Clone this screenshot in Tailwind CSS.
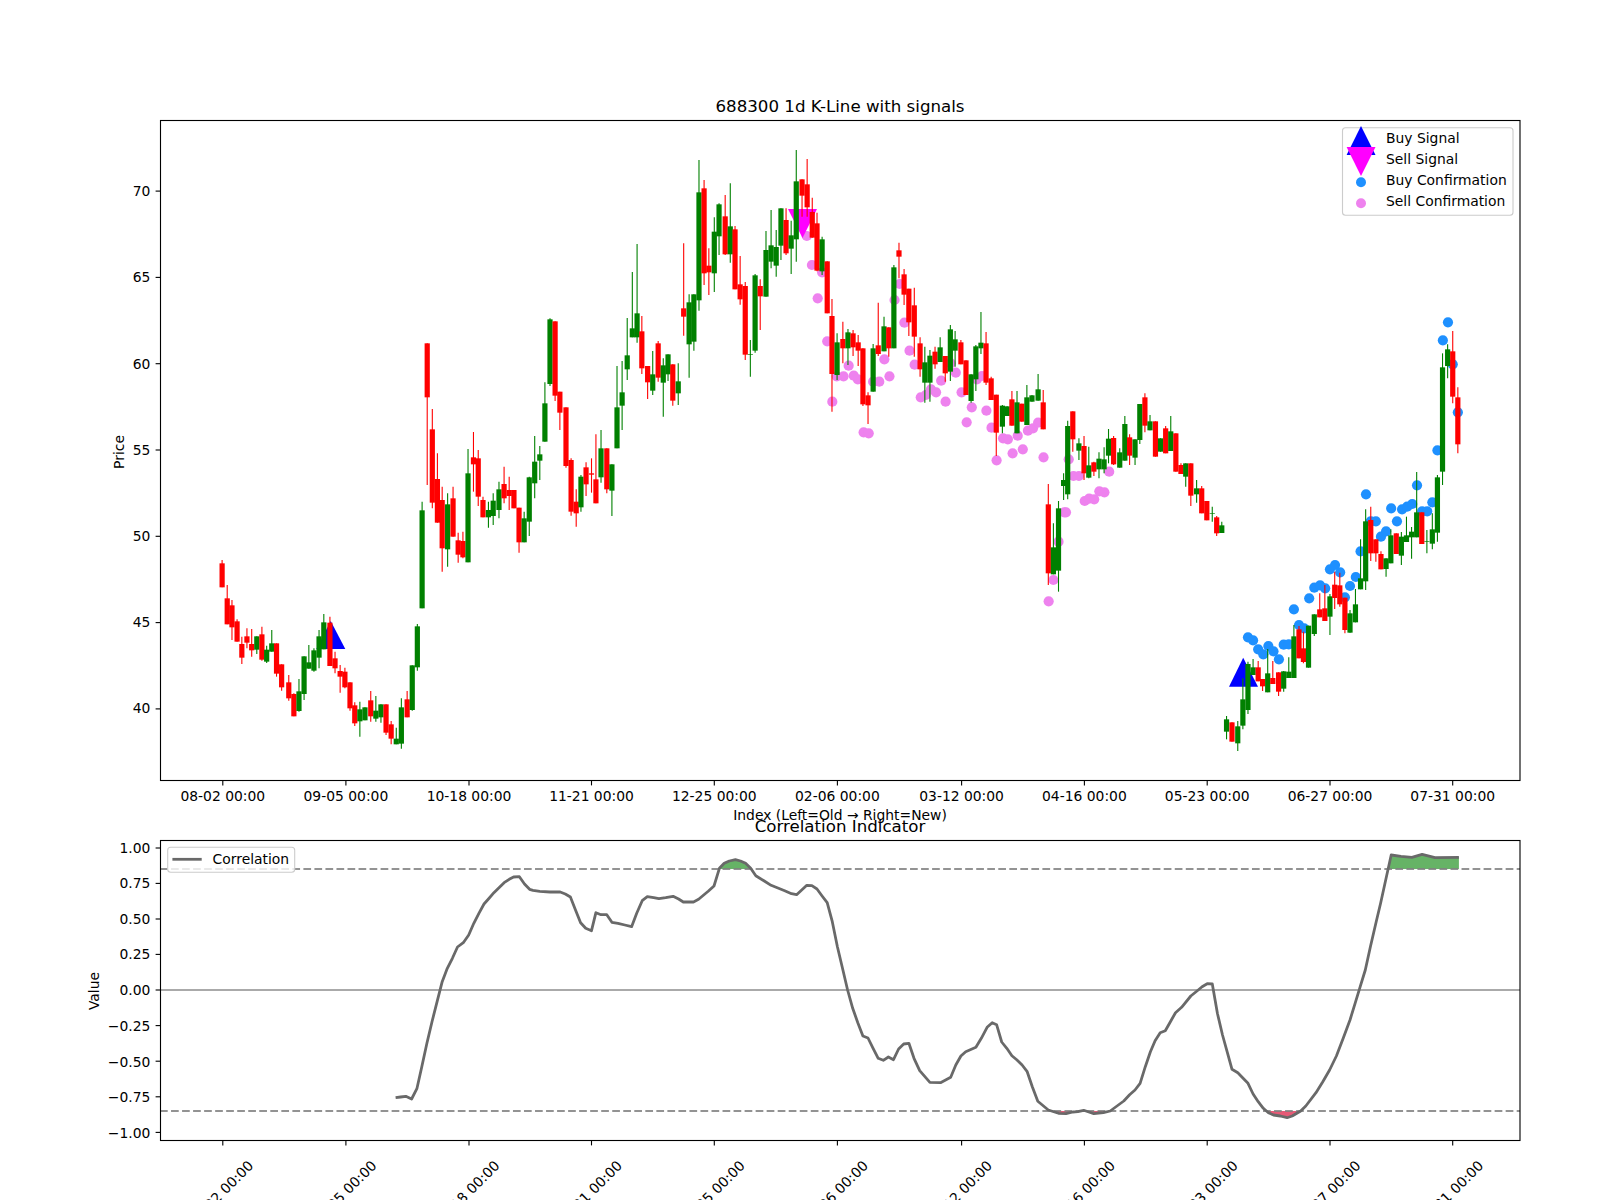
<!DOCTYPE html>
<html lang="en">
<head>
<meta charset="utf-8">
<title>688300 1d K-Line with signals</title>
<script src="https://cdn.jsdelivr.net/npm/@tailwindcss/browser@4"></script>
</head>
<body class="m-0 bg-white">
<div class="w-[1600px] h-[1200px] overflow-hidden bg-white">
<svg id="fig" class="block font-['DejaVu_Sans',sans-serif] text-[13.89px] fill-black" width="1600" height="1200" viewBox="0 0 1600 1200" xmlns="http://www.w3.org/2000/svg">
  <defs>
    <clipPath id="above"><rect x="160" y="840" width="1360" height="29"/></clipPath>
    <clipPath id="below"><rect x="160" y="1111" width="1360" height="29"/></clipPath>
    <clipPath id="ax1"><rect x="160" y="120" width="1360" height="660"/></clipPath>
  </defs>
  <g id="points" clip-path="url(#ax1)"></g>
  <g id="candles" clip-path="url(#ax1)"></g>
  <g id="ind"></g>
  <g id="ticks" stroke="#000" stroke-width="1.11"></g>
  <rect x="160.5" y="120.5" width="1359.5" height="660" fill="none" stroke="#000" stroke-width="1.11"/>
  <rect x="160.5" y="840.5" width="1359.5" height="300" fill="none" stroke="#000" stroke-width="1.11"/>

  <!-- price legend -->
  <rect x="1342.5" y="127.7" width="170.5" height="87.6" rx="3" fill="#fff" fill-opacity="0.8" stroke="#ccc" stroke-width="1.11"/>
  <polygon points="1346.6,155 1361,126 1375.5,155" fill="#0000ff"/>
  <polygon points="1346.6,147 1375.5,147 1361,176" fill="#ff00ff"/>
  <circle cx="1361" cy="182.3" r="5" fill="#1e90ff"/>
  <circle cx="1361" cy="203.3" r="5" fill="#ee82ee"/>
  <text x="1386" y="143">Buy Signal</text>
  <text x="1386" y="164">Sell Signal</text>
  <text x="1386" y="185">Buy Confirmation</text>
  <text x="1386" y="206">Sell Confirmation</text>

  <!-- titles and axis labels -->
  <text x="840" y="111.7" text-anchor="middle" class="text-[16.67px]">688300 1d K-Line with signals</text>
  <text x="840" y="820" text-anchor="middle">Index (Left=Old → Right=New)</text>
  <text x="840" y="831.7" text-anchor="middle" class="text-[16.67px]">Correlation Indicator</text>
  <text transform="translate(124 452) rotate(-90)" text-anchor="middle">Price</text>
  <text transform="translate(98.5 991) rotate(-90)" text-anchor="middle">Value</text>

  <!-- price ticks -->
  <g text-anchor="end">
    <text x="150.3" y="196">70</text>
    <text x="150.3" y="282">65</text>
    <text x="150.3" y="368.5">60</text>
    <text x="150.3" y="454.5">55</text>
    <text x="150.3" y="541">50</text>
    <text x="150.3" y="627">45</text>
    <text x="150.3" y="713">40</text>
  </g>
  <g text-anchor="middle">
    <text x="222.8" y="801">08-02 00:00</text>
    <text x="345.9" y="801">09-05 00:00</text>
    <text x="469" y="801">10-18 00:00</text>
    <text x="591.5" y="801">11-21 00:00</text>
    <text x="714.3" y="801">12-25 00:00</text>
    <text x="837.4" y="801">02-06 00:00</text>
    <text x="961.6" y="801">03-12 00:00</text>
    <text x="1084.4" y="801">04-16 00:00</text>
    <text x="1207.2" y="801">05-23 00:00</text>
    <text x="1330" y="801">06-27 00:00</text>
    <text x="1452.7" y="801">07-31 00:00</text>
  </g>

  <!-- indicator ticks -->
  <g text-anchor="end">
    <text x="150.3" y="853">1.00</text>
    <text x="150.3" y="888">0.75</text>
    <text x="150.3" y="924">0.50</text>
    <text x="150.3" y="959">0.25</text>
    <text x="150.3" y="995">0.00</text>
    <text x="150.3" y="1031">−0.25</text>
    <text x="150.3" y="1066.5">−0.50</text>
    <text x="150.3" y="1102">−0.75</text>
    <text x="150.3" y="1138">−1.00</text>
  </g>
  <g text-anchor="middle">
    <text transform="translate(220.8 1193) rotate(-45)" y="5">08-02 00:00</text>
    <text transform="translate(343.9 1193) rotate(-45)" y="5">09-05 00:00</text>
    <text transform="translate(467 1193) rotate(-45)" y="5">10-18 00:00</text>
    <text transform="translate(589.5 1193) rotate(-45)" y="5">11-21 00:00</text>
    <text transform="translate(712.3 1193) rotate(-45)" y="5">12-25 00:00</text>
    <text transform="translate(835.4 1193) rotate(-45)" y="5">02-06 00:00</text>
    <text transform="translate(959.6 1193) rotate(-45)" y="5">03-12 00:00</text>
    <text transform="translate(1082.4 1193) rotate(-45)" y="5">04-16 00:00</text>
    <text transform="translate(1205.2 1193) rotate(-45)" y="5">05-23 00:00</text>
    <text transform="translate(1328 1193) rotate(-45)" y="5">06-27 00:00</text>
    <text transform="translate(1450.7 1193) rotate(-45)" y="5">07-31 00:00</text>
  </g>

  <!-- indicator legend -->
  <rect x="167.7" y="847.3" width="127" height="25" rx="3" fill="#fff" fill-opacity="0.8" stroke="#ccc" stroke-width="1.11"/>
  <line x1="172.4" y1="859.3" x2="201.7" y2="859.3" stroke="#696969" stroke-width="2.78"/>
  <text x="212.6" y="864">Correlation</text>
</svg>
</div>
<script>
const NS = 'http://www.w3.org/2000/svg';
const add = (p, n, a) => { const e = document.createElementNS(NS, n); for (const k in a) e.setAttribute(k, a[k]); p.appendChild(e); return e; };
const X = (b, z) => b + z / 2.94, Y = (b, z) => b + z / 3;
const pts = document.getElementById('points'), cdl = document.getElementById('candles'), ind = document.getElementById('ind'), tks = document.getElementById('ticks');

const pink = '805 408,820 495,850 517,837 595,1078 552,1063 600,865 724,1092 668,1107 752,1122 794,928 797,913 829,893 829,943 827,955 838,1033 778,1048 829,1018 845,1000 845,880 905,972 997,987 1000,1140 892,1155 885,1170 868,1185 877,1200 842,1213 905,1243 818,1228 790,1260 877,1275 967,1290 922,1305 838,1320 828,1333 932,1348 983,1363 1081,1382 1015,1396 1018,1410 1060,1425 1007,1440 1048,1455 992,1470 985,1485 968,1501 1072,1575 1078,1589 1128,1605 1128,1567 1237,1622 1203,1635 1196,1650 1198,1665 1174,1680 1177,1694 1115,1530 1440,1516 1504,1545 1325,1562 1237';
pink.split(',').forEach(s => { const [x, y] = s.split(' ').map(Number); add(pts, 'circle', {cx: X(533, x), cy: Y(100, y), r: 5.1, fill: '#ee82ee'}); });
const blue = '535 562,550 571,565 598,580 613,595 588,610 604,626 628,640 584,655 583,670 478,685 525,700 535,715 445,730 413,747 406,762 415,776 358,791 345,806 367,820 442,835 408,852 381,866 304,882 133,896 214,911 214,926 260,941 244,956 175,973 214,988 178,1003 170,1018 162,1032 106,1047 184,1062 184,1077 157,1092 1,1108 -329,1123 -383,1137 -257,1152 -113';
blue.split(',').forEach(s => { const [x, y] = s.split(' ').map(Number); add(pts, 'circle', {cx: X(1066, x), cy: Y(450, y), r: 5.1, fill: '#1e90ff'}); });
add(pts, 'polygon', {points: '316.3,649 330.7,621 345.3,649', fill: '#0000ff'});
add(pts, 'polygon', {points: '1229,686.7 1243.2,657.7 1258,686.7', fill: '#0000ff'});
add(pts, 'polygon', {points: '788,209 817,209 802.5,238', fill: '#ff00ff'});

const segs = [
[0,480,`r653 240 250 322 322,r668 315 355 433 433,r682 360 376 442 480,r697 418 424 485 485,r711 470 492 533 552,r726 445 469 488 505,r740 447 492 511 530,g755 469 469 509 522,r770 440 463 539 542,g784 497 509 545 549,g799 450 490 515 515,r813 490 490 581 590,r828 553 553 622 632,r849 585 607 655 662,r864 640 642 709 709,g879 597 634 693 695,g894 529 529 642 660,g908 495 547 566 566,g923 505 511 572 575,g938 450 469 533 565,g952 402 427 508 508,r970 410 428 558 558,r985 515 535 565 580,r1000 555 573 590 638,r1014 563 575 622 625,r1029 607 607 685 692,r1043 667 676 730 738,g1058 665 688 724 770,g1073 682 682 721 721,r1090 633 661 709 725,g1105 648 692 716 725,g1120 673 673 712 728,r1135 673 673 758 765,r1150 723 733 776 793,g1165 743 776 793 793,g1180 655 682 791 806,r1197 633 658 712 712,g1212 556 556 690 692,g1227 432 439 562 572,g1241 65 91 385 385,r1256 -410 -410 -248 15,r1271 -213 -152 68 85,r1286 -80 -3 128 128,r1300 20 60 205 275,g1316 40 73 208 260,r1332 20 55 170 170,r1347 158 181 224 248,r1361 155 183 232 235,g1376 -93 -20 247 247,r1392 -144 -68 -47 35,r1406 -90 -65 50 78,r1420 50 60 112 112,g1436 65 90 112 143,g1450 40 62 108 135,g1467 5 28 90 115,r1482 -40 12 55 70,r1497 -10 30 48 90,r1511 30 30 85 85,r1526 83 83 187 218,g1541 95 115 187 187,g1556 -10 -8 125 168`],
[533,100,`g5 1008 1085 1150 1195,g20 1038 1063 1082 1140,g35 847 910 1025 1025,g50 655 658 852 858,r65 664 664 887 903,r79 875 875 938 990,r97 922 922 1098 1103,r112 1075 1080 1235 1247,r127 1168 1205 1240 1280,g141 1125 1130 1222 1235,r156 1087 1102 1153 1188,r172 1075 1120 1124 1178,r185 1003 1138 1210 1210,g200 990 1045 1132 1148,r217 1045 1045 1168 1180,g232 1093 1093 1172 1248,g247 798 922 1045 1045,g262 783 877 917 990,g277 654 766 808 840,g292 516 685 712 712,g306 432 640 712 728,r320 648 694 805 822,r337 798 798 847 897,g352 753 823 872 885,r368 723 730 833 845,g383 775 796 848 950,g397 763 763 823 843,r411 793 793 902 917,g427 790 844 880 915,r443 430 625 650 707,g459 583 607 733 833,g473 583 583 725 752,g488 180 277 601 632,r503 240 265 520 555,r517 445 497 517 585,g533 352 395 520 576,g547 310 313 409 465,r565 285 349 463 465,g580 250 379 463 488,r594 378 388 568 568,r609 468 553 598 614,r624 546 558 764 780,g639 720 762 764 830,g653 522 526 752 758,r668 538 558 589 690,g685 393 450 590 590,g700 330 436 485 505,g715 390 441 497 530,g729 325 325 437 480,r744 325 360 460 465,g759 362 406 446 522,g774 150 244 418 485,r791 238 238 287 350,r806 177 253 322 350,r821 293 336 413 413,r835 338 370 512 514,g850 410 418 514 525,r865 484 484 640 640,r879 597 648 822 935,g894 700 727 825 840,r911 665 717 745 790,g926 687 697 745 795,r941 690 700 742 768,r956 705 727 752 798,r970 745 745 913 918,r985 877 886 916 972,g1000 732 745 875 875,r1015 608 736 762 768,g1032 650 679 754 754,r1046 682 682 745 770,g1061 495 502 745 745,r1076 428 451 470 535,r1091 507 523 584 615,r1105 566 566 667 708,r1121 563 616 710 770,r1138 712 730 808 830,g1152 740 787 848 908,g1167 750 767 848 905,r1182 740 755 793 806,g1197 712 742 786 786,r1212 768 768 820 845,g1227 675 688 815 843,g1241 693 718 752 800,r1258 720 727 793 793,r1273 781 781 885 885,g1288 823 823 903 908,g1302 735 739 838 873,g1317 636 728 745 762,r1332 696 730 848 855,r1347 830 835 900 900,r1362 884 884 998 1068,g1380 915 917 980 1000,g1394 919 919 948 948,r1408 873 898 977 977,g1423 873 907 1000 1000,r1437 911 911 965 965,g1452 855 892 975 975,g1467 885 886 905 905,g1485 822 868 902 902,r1500 870 907 988 988,r1515 1152 1213 1420 1455,g1530 1270 1342 1423 1423,g1545 1203 1225 1412 1475,g1560 1120 1140 1158 1200`],
[1066,100,`g5 962 978 1183 1198,r20 934 934 1018 1055,g38 1015 1030 1052 1080,r53 1008 1038 1120 1140,g67 1040 1096 1133 1135,r82 1085 1087 1115 1128,g97 1057 1076 1108 1135,g112 1042 1078 1108 1120,g125 987 1016 1067 1090,r140 1008 1014 1093 1095,g158 1045 1057 1103 1103,g173 948 972 1082 1082,r187 1003 1012 1067 1095,g203 1018 1018 1073 1095,g217 912 912 1020 1032,r232 880 892 977 997,g247 945 964 991 991,r263 964 964 1070 1070,g278 1015 1015 1055 1055,r293 978 985 1060 1060,g308 948 994 1053 1053,r323 1000 1000 1115 1115,r338 1090 1095 1122 1122,g352 1090 1090 1130 1160,r367 1090 1090 1187 1218,g384 1140 1165 1183 1208,r399 1158 1165 1240 1240,r414 1203 1203 1261 1261,g430 1220 1240 1242 1265,r443 1248 1252 1300 1308,g458 1265 1276 1299 1299`],
[1066,450,`g472 798 808 845 868,r488 817 817 875 875,g505 813 829 880 903,g520 685 748 827 838,g535 635 642 780 792,g550 627 652 675 675,r565 633 652 694 694,r578 687 687 709 723,g593 597 670 727 727,r608 633 684 702 702,r625 667 667 725 738,g640 663 664 716 725,g655 622 665 684 684,g670 525 559 684 684,r685 528 538 625 625,r698 545 595 636 640,g713 527 527 653 653,g730 493 493 552 558,r746 430 478 502 502,r761 405 475 513 513,g776 432 439 500 555,r790 365 404 444 477,r805 368 406 463 470,r820 443 443 540 550,g835 480 490 548 548,g851 417 463 517 517,g866 268 385 418 418,g881 178 214 394 420,r896 170 210 310 333,r911 268 268 310 335,r926 304 312 358 358,g941 325 325 357 380,g955 238 256 340 340,r971 250 250 312 312,g986 246 260 317 345,g1001 200 256 276 276,g1016 231 245 262 326,g1031 66 187 262 262,r1046 187 187 282 282,g1061 240 274 276 310,g1077 190 238 281 298,g1092 75 82 248 275`],
[1066,100,`g1107 760 802 1115 1155,g1122 733 748 798 835,r1137 693 754 890 910,r1152 862 892 1033 1060`]
];
segs.forEach(([bx, by, s]) => s.split(',').forEach(e => {
  const c = e[0] === 'r' ? '#ff0000' : '#008000';
  const [x, wt, bt, bb, wb] = e.slice(1).split(' ').map(Number);
  const cx = X(bx, x);
  add(cdl, 'line', {x1: cx, x2: cx, y1: Y(by, wt), y2: Y(by, wb), stroke: c, 'stroke-width': 1.1});
  add(cdl, 'rect', {x: cx - 2.6, width: 5.2, y: Y(by, bt), height: Math.max(Y(by, bb) - Y(by, bt), 0.6), fill: c});
}));

// correlation series
const curve = [
[0,800,'1163 893,1178 891,1193 889,1210 897,1226 865,1240 800,1255 730,1270 665,1285 605,1300 545,1315 505,1330 475,1345 441,1362 428,1378 405,1393 370,1408 340,1423 312,1438 295,1452 278,1467 263,1482 248,1497 238,1510 231,1527 230,1542 252,1557 268'],
[533,800,'0 271,20 274,50 276,80 276,95 282,110 291,125 330,140 368,155 385,172 392,185 338,200 344,217 344,232 367,250 370,270 375,290 380,305 340,321 302,336 290,355 293,370 296,390 293,412 289,428 297,442 306,472 306,487 298,515 274,532 258,548 205,562 190,577 183,595 179,610 183,625 190,640 205,655 227,680 243,700 256,740 272,760 281,775 284,790 270,805 256,820 257,835 267,850 288,865 308,880 365,895 440,910 505,925 570,940 625,955 668,970 708,985 714,1000 745,1015 775,1030 781,1045 771,1060 779,1075 747,1090 732,1105 730,1120 775,1137 812,1167 847,1198 848,1228 832,1243 795,1258 768,1272 755,1302 742,1318 715,1335 682,1350 668,1363 674,1378 726,1393 745,1408 767,1423 780,1438 795,1453 815,1468 860,1484 904,1515 930,1545 940'],
[1066,800,'0 941,20 936,35 935,52 931,82 941,110 938,130 933,150 918,170 903,187 884,203 870,218 850,233 800,248 755,262 722,277 698,292 692,307 665,322 638,340 622,367 588,385 573,400 560,415 551,430 552,445 640,460 705,475 760,488 808,505 818,535 850,550 882,565 905,580 925,595 938,610 945,630 948,650 953,665 948,690 933,705 918,735 878,755 845,775 810,795 768,815 715,835 660,850 610,865 560,880 510,895 440,912 365,925 310,940 240,956 165,985 169,1017 172,1047 163,1085 173,1155 172']
];
const path = [];
curve.forEach(([bx, by, s]) => s.split(',').forEach(p => { const [x, y] = p.split(' ').map(Number); path.push([X(bx, x), Y(by, y)]); }));
const ds = path.map(p => p[0].toFixed(1) + ',' + p[1].toFixed(1)).join(' ');
const first = path[0][0].toFixed(1), last = path[path.length - 1][0].toFixed(1);
add(ind, 'polygon', {points: ds + ` ${last},869 ${first},869`, fill: '#008000', 'fill-opacity': 0.6, 'clip-path': 'url(#above)'});
add(ind, 'polygon', {points: ds + ` ${last},1111 ${first},1111`, fill: '#dc143c', 'fill-opacity': 0.7, 'clip-path': 'url(#below)'});
add(ind, 'line', {x1: 160, x2: 1520, y1: 869, y2: 869, stroke: '#808080', 'stroke-opacity': 0.85, 'stroke-width': 2.08, 'stroke-dasharray': '7.7 3.33'});
add(ind, 'line', {x1: 160, x2: 1520, y1: 1111, y2: 1111, stroke: '#808080', 'stroke-opacity': 0.85, 'stroke-width': 2.08, 'stroke-dasharray': '7.7 3.33'});
add(ind, 'line', {x1: 160, x2: 1520, y1: 990, y2: 990, stroke: '#aaaaaa', 'stroke-width': 2.08});
add(ind, 'polyline', {points: ds, fill: 'none', stroke: '#696969', 'stroke-width': 2.78, 'stroke-linejoin': 'round'});

// tick marks
[222.8,345.9,469,591.5,714.3,837.4,961.6,1084.4,1207.2,1330,1452.7].forEach(x => {
  add(tks, 'line', {x1: x, x2: x, y1: 780.5, y2: 785.4});
  add(tks, 'line', {x1: x, x2: x, y1: 1140.5, y2: 1145.4});
});
[191.1,277.4,363.7,450,536.3,622.6,708.9,848,883.4,919,954.4,990,1025.6,1061.2,1096.8,1132.4].forEach(y => add(tks, 'line', {x1: 155.6, x2: 160.5, y1: y, y2: y}));
</script>
</body>
</html>
